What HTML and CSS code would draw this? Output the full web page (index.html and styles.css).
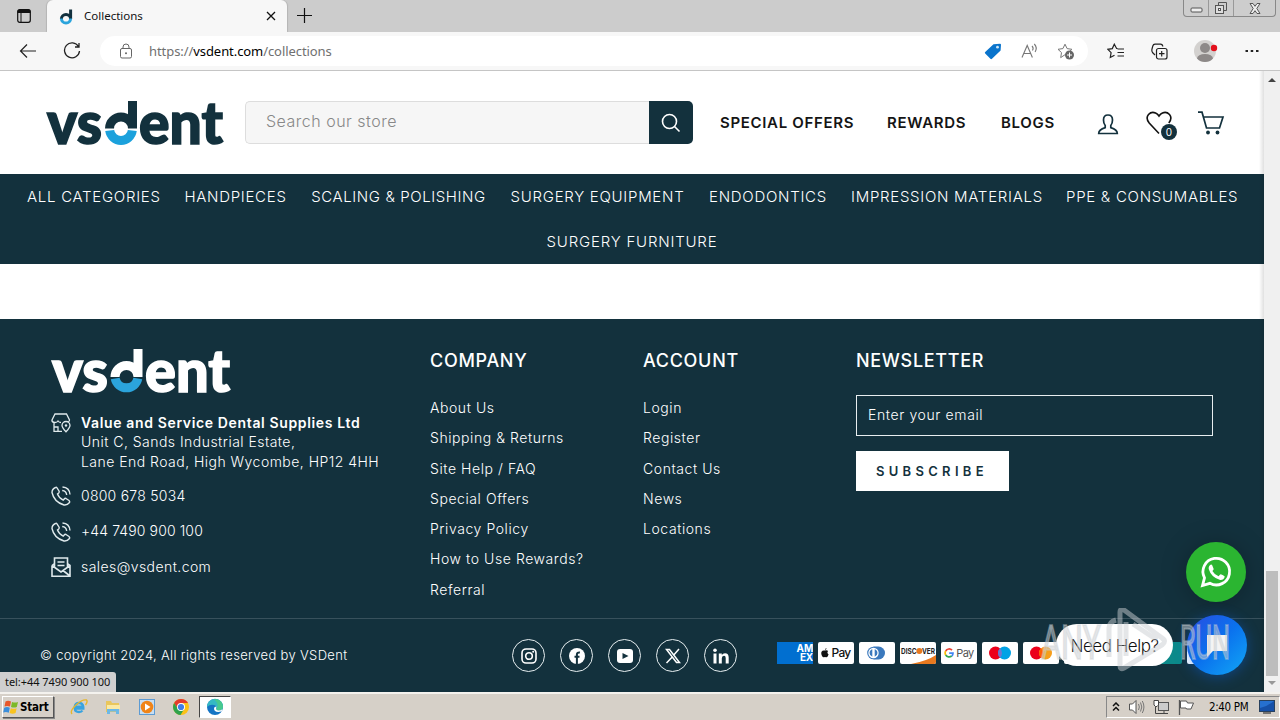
FILE: index.html
```html
<!DOCTYPE html>
<html lang="en">
<head>
<meta charset="utf-8">
<title>Collections</title>
<link rel="stylesheet" href="styles.css">
</head>
<body>
<div class="window">
  <div class="tabbar">
    <svg class="tab-actions" width="16" height="16" viewBox="0 0 16 16"><rect x="1.7" y="1.7" width="12.6" height="12.6" rx="2" fill="none" stroke="#111" stroke-width="1.2"/><path d="M1.5 5V3.5a2 2 0 0 1 2-2h9a2 2 0 0 1 2 2V5z" fill="#111"/><path d="M5 5v9" stroke="#111"/></svg>
    <div class="tab">
      <svg width="14" height="17" viewBox="0 0 14 17"><path d="M2.4 11a4.6 4.6 0 0 1 9.2 0V1.5" fill="none" stroke="#12303d" stroke-width="3"/><path d="M2.4 10.5a4.6 4.6 0 0 0 9.2 0" fill="none" stroke="#2ba4dc" stroke-width="3"/></svg>
      <span class="tab-title">Collections</span>
      <svg class="tab-close" width="10" height="10" viewBox="0 0 10 10"><path d="M1 1l8 8M9 1L1 9" stroke="#111" stroke-width="1.3"/></svg>
    </div>
    <svg class="new-tab" width="15" height="15" viewBox="0 0 15 15"><path d="M7.500 0v15M0 7.500h15" stroke="#111" stroke-width="1.200"/></svg>
    <div class="win-controls">
      <span class="wc"><svg width="13" height="6" viewBox="0 0 13 6"><rect x="1" y="1" width="11" height="4" rx="1" fill="#eee" stroke="#555"/></svg></span>
      <span class="wc"><svg width="14" height="14" viewBox="0 0 14 14"><path d="M4.500 4V1.500h8v8H10" fill="none" stroke="#555"/><rect x="1.500" y="4.500" width="8" height="8" fill="#ddd" stroke="#555"/><rect x="4.500" y="7.500" width="2" height="2" fill="#fff" stroke="#555"/></svg></span>
      <span class="wc wide"><svg width="12" height="11" viewBox="0 0 12 11"><path d="M1 .5h3l2 2.800 2-2.800h3L7.800 5.500 11 10.500H8L6 7.700 4 10.500H1l3.200-5z" fill="#eee" stroke="#555"/></svg></span>
    </div>
  </div>

  <div class="toolbar">
    <svg class="back" width="18" height="16" viewBox="0 0 18 16"><path d="M17 8H1.500M8 1.500L1.500 8 8 14.500" fill="none" stroke="#222" stroke-width="1.200"/></svg>
    <svg class="reload" width="18" height="18" viewBox="0 0 18 18"><path d="M15.500 4.500A7.500 7.500 0 1 0 16.500 9M16 1v4h-4" fill="none" stroke="#222" stroke-width="1.300"/></svg>
    <div class="address">
      <svg class="lock" width="14" height="16" viewBox="0 0 14 16"><rect x="1.500" y="5.500" width="11" height="9.500" rx="1.500" fill="none" stroke="#666"/><path d="M4 5.500V4a3 3 0 0 1 6 0v1.500" fill="none" stroke="#666"/><circle cx="7" cy="10.300" r="1" fill="#666"/></svg>
      <span class="url">https://<b>vsdent.com</b>/collections</span>
      <svg class="tag" width="18" height="17" viewBox="0 0 18 17"><path d="M9.500 1.200L16 .800q1 0 1 1L16.600 7.500 8 15.800q-.8.700-1.600 0L1.200 10.600q-.8-.8 0-1.600z" fill="#0a74cc"/><circle cx="13.500" cy="4.200" r="1.400" fill="#cfe6f7"/></svg>
      <svg class="read" width="18" height="16" viewBox="0 0 18 16"><path d="M1 14.500L6.200 2.500l5.200 12M3 10.500h6.600M11 3q2 2 .500 4.500M13.300 1q3.400 3.500.800 8" fill="none" stroke="#777" stroke-width="1.100"/></svg>
      <svg class="fav" width="18" height="17" viewBox="0 0 18 17"><path d="M8 1.200l2.100 4.400 4.800.7-3.500 3.400.3 2-3.700 0-4.300 2.900.8-5L1 6.300l4.900-.7z" fill="none" stroke="#777"/><circle cx="12.500" cy="12" r="4.500" fill="#666"/><path d="M12.500 9.500v5M10 12h5" stroke="#fff"/></svg>
    </div>
    <svg class="t1" width="18" height="16" viewBox="0 0 18 16"><path d="M10.500 5.500H9.600L7.300 1.200 5.300 5.600.900 6.300l3.200 3.300-.8 4.900 4.200-2.300M10.500 6h6.500M10.500 9.500h6.500M10.500 13h6.500" fill="none" stroke="#222" stroke-width="1.200"/></svg>
    <svg class="t2" width="17" height="17" viewBox="0 0 17 17"><rect x="5.500" y="5.500" width="10.500" height="10.500" rx="2" fill="none" stroke="#222" stroke-width="1.200"/><path d="M10.700 8v5.500M8 10.700h5.500M4 12L1.500 9.500Q.500 8 1 6l.8-3Q2.300 1.300 4 1.200h5.500q2 0 2.300 2.300" fill="none" stroke="#222" stroke-width="1.200"/></svg>
    <svg class="profile" width="24" height="24" viewBox="0 0 24 24"><defs><clipPath id="av"><circle cx="11" cy="12" r="11"/></clipPath></defs><circle cx="11" cy="12" r="11" fill="#d3d1cf"/><g clip-path="url(#av)" fill="#8d8988"><circle cx="11" cy="9" r="5"/><ellipse cx="11" cy="19.500" rx="8" ry="4.500"/></g><circle cx="20" cy="9" r="3.200" fill="#e3101c"/></svg>
    <svg class="more" width="14" height="4" viewBox="0 0 14 4"><path d="M.500 1h2.500v2H.500zM5.700 1h2.500v2H5.700zM11 1h2.500v2H11z" fill="#222"/></svg>
  </div>

  <div class="viewport">
    <div class="page">
      <header class="header">
        <svg class="logo" width="180" height="50" viewBox="0 0 180 50">
          <text class="wordmark" x="2" y="44.500" textLength="55" lengthAdjust="spacingAndGlyphs">vs</text>
          <path d="M64.500 29.500a11.500 11.500 0 0 1 23 0V2" fill="none" stroke="#13313d" stroke-width="9"/>
          <path d="M64.700 31.500a11.400 11.400 0 0 0 22.600 0" fill="none" stroke="#1ba1dc" stroke-width="9"/>
          <text class="wordmark" x="94" y="44.500" textLength="84" lengthAdjust="spacingAndGlyphs">ent</text>
        </svg>
        <div class="search"><span class="search-field">Search our store</span><span class="search-btn"><svg width="20" height="20" viewBox="0 0 20 20"><circle cx="8.500" cy="8.500" r="7" fill="none" stroke="#fff" stroke-width="1.600"/><path d="M13.500 13.500l5 5" stroke="#fff" stroke-width="1.600"/></svg></span></div>
        <nav class="top-links"><a>SPECIAL OFFERS</a><a>REWARDS</a><a>BLOGS</a></nav>
        <svg class="account" width="22" height="22" viewBox="0 0 22 22"><path d="M1.700 20.500h18.600q0-4-6.500-5.900V12.500Q15.500 10.500 15.500 7q0-5-4.500-5T6.500 7q0 3.500 1.700 5.500v2.100q-6.500 1.900-6.500 5.900z" fill="none" stroke="#13313d" stroke-width="1.700"/></svg>
        <div class="wish"><svg width="26" height="24" viewBox="0 0 26 24"><path d="M13 22.500L3.200 12Q-.6 7 2.500 3.500 5.500.300 9.500 2q2 .8 3.500 3Q14.500 2.800 16.500 2q4-1.700 7 1.500 3.100 3.500-.7 8.500" fill="none" stroke="#111" stroke-width="1.600"/></svg><span class="badge">0</span></div>
        <svg class="cart" width="28" height="25" viewBox="0 0 28 25"><path d="M1 1.200h4L9.500 17h13L26 6H6.500" fill="none" stroke="#13313d" stroke-width="1.700"/><circle cx="11" cy="21.500" r="1.900" fill="#13313d"/><circle cx="20.500" cy="21.500" r="1.900" fill="#13313d"/></svg>
      </header>
      <nav class="cats">
        <div class="cat-row"><a>ALL CATEGORIES</a><a>HANDPIECES</a><a class="tight">SCALING &amp; POLISHING</a><a>SURGERY EQUIPMENT</a><a>ENDODONTICS</a><a>IMPRESSION MATERIALS</a><a>PPE &amp; CONSUMABLES</a></div>
        <div class="cat-last"><a>SURGERY FURNITURE</a></div>
      </nav>
      <main class="blank"></main>
      <footer class="footer">
        <div class="foot-main">
          <section class="about">
            <svg class="foot-logo" width="182" height="50" viewBox="0 0 182 50">
              <text class="wordmark light" x="2" y="44.500" textLength="56" lengthAdjust="spacingAndGlyphs">vs</text>
              <path d="M65 30a11.500 11.500 0 0 1 23 0V2" fill="none" stroke="#fff" stroke-width="9"/>
              <path d="M65.200 31.500a11.500 11.500 0 0 0 22.600 0" fill="none" stroke="#2ba4dc" stroke-width="9"/>
              <text class="wordmark light" x="95" y="44.500" textLength="85" lengthAdjust="spacingAndGlyphs">ent</text>
            </svg>
            <div class="contact addr">
              <svg width="20" height="20" viewBox="0 0 20 20"><path d="M3 9v9.300h8M3 9.500Q.500 9 1 7l3-6h11.500l3 6q.2 1-1 1.800M1 7.500Q2 9.500 4 9.500T7 8q1 1.500 3 1.500M7 18.300V14H3M15 18.800q-4-4.300-4-6.300a4 4 0 0 1 8 0q0 2-4 6.300z" fill="none" stroke="#dfe9ec" stroke-width="1.300"/><circle cx="15" cy="12.500" r="1.200" fill="#dfe9ec"/></svg>
              <div class="lines"><strong>Value and Service Dental Supplies Ltd</strong><span>Unit C, Sands Industrial Estate,</span><span>Lane End Road, High Wycombe, HP12 4HH</span></div>
            </div>
            <div class="contact"><svg width="20" height="20" viewBox="0 0 20 20"><path d="M4.500 1.500Q1 3 1 6.500 3 16 13 19q3 .5 5.500-2.500.5-1-.500-2l-3-2q-1-.5-1.800.5l-1 1.200Q8 12 6.500 8l1.200-1Q8.500 6 8 5L6 1.800q-.6-.8-1.500-.3zM11.500 1Q18.500 1.500 19 8.500M11.200 4.500q4 .3 4.500 4.500" fill="none" stroke="#dfe9ec" stroke-width="1.400"/></svg><span class="p1">0800 678 5034</span></div>
            <div class="contact second"><svg width="20" height="20" viewBox="0 0 20 20"><path d="M4.500 1.500Q1 3 1 6.500 3 16 13 19q3 .5 5.500-2.500.5-1-.500-2l-3-2q-1-.5-1.800.5l-1 1.200Q8 12 6.500 8l1.200-1Q8.500 6 8 5L6 1.800q-.6-.8-1.500-.3zM11.500 1Q18.500 1.500 19 8.500M11.200 4.500q4 .3 4.500 4.500" fill="none" stroke="#dfe9ec" stroke-width="1.400"/></svg><span class="p2">+44 7490 900 100</span></div>
            <div class="contact"><svg width="20" height="20" viewBox="0 0 20 20"><path d="M1 8.500v10.700h18V8.500L16.500 6.500M1 8.500l2.500-2M3.500 10V1h13v9M1 8.500l9 6.500 9-6.500M19 19l-7-5.500M6.500 5h7M6.500 8.500h7" fill="none" stroke="#dfe9ec" stroke-width="1.600"/></svg><span class="p3">sales@vsdent.com</span></div>
          </section>
          <section class="links company"><h2>COMPANY</h2><a>About Us</a><a>Shipping &amp; Returns</a><a>Site Help / FAQ</a><a>Special Offers</a><a>Privacy Policy</a><a>How to Use Rewards?</a><a>Referral</a></section>
          <section class="links account-links"><h2>ACCOUNT</h2><a>Login</a><a>Register</a><a>Contact Us</a><a>News</a><a>Locations</a></section>
          <section class="news"><h2>NEWSLETTER</h2><div class="email">Enter your email</div><div class="subscribe">SUBSCRIBE</div></section>
        </div>
        <div class="foot-bottom">
          <span class="copy">© copyright 2024, All rights reserved by VSDent</span>
          <div class="socials">
            <span><svg viewBox="0 0 16 16"><rect x="1" y="1" width="14" height="14" rx="4" fill="none" stroke="#fff" stroke-width="1.600"/><circle cx="8" cy="8" r="3.300" fill="none" stroke="#fff" stroke-width="1.600"/><circle cx="12.200" cy="3.800" r="1" fill="#fff"/></svg></span>
            <span><svg viewBox="0 0 16 16"><circle cx="8" cy="8" r="8" fill="#fff"/><path d="M7.900 16V6.500q0-2.300 3-2M5.500 8.800h5" fill="none" stroke="#13313d" stroke-width="2"/></svg></span>
            <span><svg viewBox="0 0 16 16"><rect y="1" width="16" height="14" rx="3" fill="#fff"/><path d="M5.500 5l6 3-6 3z" fill="#13313d"/></svg></span>
            <span><svg viewBox="0 0 16 16"><path d="M1.500 1.500h3L14.500 14.500h-3zM14 1L9 6.800M7 9.200L1.500 15" fill="none" stroke="#fff" stroke-width="1.500"/></svg></span>
            <span><svg viewBox="0 0 16 16"><path d="M.500 5.500h3V15.500h-3zM5.800 5.500h3v1.400q1-1.700 3.200-1.700 3.700 0 3.700 4.300v6h-3v-5.400q0-2.300-1.700-2.300-2.200 0-2.200 2.500v5.200h-3z" fill="#fff"/><circle cx="2" cy="2.300" r="1.800" fill="#fff"/></svg></span>
          </div>
          <div class="pay">
            <span class="amex"><b>AM</b><b>EX</b></span>
            <span class="apple"><svg width="8" height="10" viewBox="0 0 8 10"><path d="M4 2.600Q5.500 1.800 7.200 3 5.400 4.500 7.600 6.500 6.400 9.700 5 9.300q-1-.4-2 0Q1.800 9.600.8 7.500-.6 4 1.500 2.700 2.500 2.200 4 2.600zM3.900 2Q4 .4 5.600 0 5.600 1.700 3.900 2z" fill="#111"/></svg>Pay</span>
            <span><svg width="36" height="22" viewBox="0 0 36 22"><path d="M14.500 4.500h5a6.500 6.500 0 0 1 0 13h-5z" fill="#3b79bd"/><circle cx="14.500" cy="11" r="6.300" fill="#3b79bd"/><circle cx="14.500" cy="11" r="5.200" fill="#fff"/><path d="M13.300 7.200a4 4 0 0 0 0 7.600zM15.700 7.200a4 4 0 0 1 0 7.600z" fill="#3b79bd"/></svg></span>
            <span class="discover"><svg width="36" height="22" viewBox="0 0 36 22"><path d="M36 13v9H11q16-3 25-9z" fill="#e8791f"/><circle cx="19.300" cy="9" r="3" fill="#e8791f"/><text x="1" y="12" textLength="15.500" lengthAdjust="spacingAndGlyphs">DISC</text><text x="22" y="12" textLength="13" lengthAdjust="spacingAndGlyphs">VER</text></svg></span>
            <span class="gpay"><svg width="10" height="10" viewBox="0 0 10 10" fill="none" stroke-width="1.700"><path d="M8 2.200A3.900 3.900 0 0 0 1.700 3" stroke="#ea4335"/><path d="M1.700 3a4 4 0 0 0 0 4" stroke="#fbbc04"/><path d="M1.700 7A4 4 0 0 0 7.700 8" stroke="#34a853"/><path d="M5.200 5.200H9Q9 7 7.700 8" stroke="#4285f4"/></svg>Pay</span>
            <span><svg width="36" height="22" viewBox="0 0 36 22"><circle cx="13.500" cy="11" r="6.500" fill="#eb001b"/><circle cx="22.500" cy="11" r="6.500" fill="#00a2e5"/><path d="M18 6.300a6.500 6.500 0 0 1 0 9.400 6.500 6.500 0 0 1 0-9.400z" fill="#7375cf"/></svg></span>
            <span><svg width="36" height="22" viewBox="0 0 36 22"><circle cx="13.500" cy="11" r="6.500" fill="#eb001b"/><circle cx="22.500" cy="11" r="6.500" fill="#f79e1b"/><path d="M18 6.300a6.500 6.500 0 0 1 0 9.400 6.500 6.500 0 0 1 0-9.400z" fill="#ff5f00"/></svg></span>
            <span></span><span></span><span class="union"></span><span></span>
          </div>
        </div>
      </footer>
      <div class="shade"></div>
      <svg class="whatsapp" width="60" height="60" viewBox="0 0 60 60"><circle cx="30" cy="30" r="30" fill="#2bb531"/><path d="M16.500 43.500l2-7.700a13.300 13.300 0 1 1 5.400 5.500z" fill="none" stroke="#fff" stroke-width="2.800"/><path d="M25 22.500q-2.600 1.300-2.300 4.500 2.500 8.500 11.500 11 3.500.2 4.500-3.200.2-.8-3.900-2.500-.6-.2-2.200 2-4-1.600-6.200-5.400 1.600-1.500 1.200-2.200l-1.400-3.500q-.4-.8-1.200-.7z" fill="#fff"/></svg>
      <svg class="messenger" width="76" height="76" viewBox="0 0 76 76"><defs><linearGradient id="mg" x1="0" y1="0" x2="1" y2="1"><stop offset="0" stop-color="#2b4be0"/><stop offset=".5" stop-color="#0a72ee"/><stop offset="1" stop-color="#12a8f5"/></linearGradient></defs><circle cx="38" cy="38" r="30" fill="url(#mg)"/><path d="M28 28h20v16H34l-6 6z" fill="#f4f4f4"/></svg>
      <div class="help">Need Help?</div>
      <div class="status">tel:+44 7490 900 100</div>
    </div>
    <div class="scrollbar"><svg width="8" height="4" viewBox="0 0 8 4"><path d="M0 4l4-4 4 4z" fill="#444"/></svg><div class="thumb"></div><svg width="8" height="4" viewBox="0 0 8 4"><path d="M0 0l4 4 4-4z" fill="#999"/></svg></div>
  </div>

  <div class="taskbar">
    <div class="start"><svg width="16" height="16" viewBox="0 0 16 16"><path d="M2.500 2.500Q5 1 8 2.500L7 7.500Q4 6.300 1.500 7.500z" fill="#e8572a"/><path d="M9 3q3 1.200 6 0l-1.200 5Q11 9 8 8z" fill="#7db928"/><path d="M1.200 8.700Q4 7.500 6.800 8.700l-1 5Q3 12.300.200 13.500z" fill="#3b8edb"/><path d="M7.800 9.200q3 1.200 5.800 0l-1 4.800q-3 1.300-6 0z" fill="#f9c31f"/></svg><b>Start</b></div>
    <div class="quick">
      <svg width="18" height="18" viewBox="0 0 18 18"><path d="M14.500 10.500H4.800Q5 14 9 14q2.500 0 3.400-1.500M4.800 8.700Q5.200 5 9 5t4.200 3.700z" fill="none" stroke="#38a3e0" stroke-width="2.400"/><path d="M2 16Q-.5 13 6 7T16.500 2Q18 3.500 15.500 7" fill="none" stroke="#e7b62c" stroke-width="1.400"/></svg>
      <svg width="18" height="18" viewBox="0 0 18 18"><path d="M2 3h5l1 2h7v9H2z" fill="#e9c65c"/><path d="M3 7h13v4H3z" fill="#fbe9a4"/><path d="M3 16v-5h12v5h-3v-2.500H6V16z" fill="#6cb8e6"/></svg>
      <svg width="18" height="18" viewBox="0 0 18 18"><rect x="1.500" y="1.500" width="15" height="15" fill="#c8def2" stroke="#5d9bd3"/><circle cx="9" cy="9" r="6.300" fill="#f08418"/><path d="M7 5.500L12.500 9 7 12.500z" fill="#fff"/></svg>
      <svg width="18" height="18" viewBox="0 0 18 18"><circle cx="9" cy="9" r="8" fill="#fbc116"/><path d="M2.100 5A8 8 0 0 1 16 5H9L6 11z" fill="#e33b2e"/><path d="M2.100 5A8 8 0 0 0 8.500 17l3.700-6H6z" fill="#2fa24c"/><circle cx="9" cy="9" r="4" fill="#fff"/><circle cx="9" cy="9" r="3.100" fill="#3f7de8"/></svg>
      <span class="edge"><svg width="18" height="18" viewBox="0 0 18 18"><circle cx="9" cy="9" r="8" fill="#1474c4"/><path d="M1 9A8 8 0 0 1 17 8.500q0 4-4.500 4-3 0-2-2.300Q11 8 8 7 4 6 1 9z" fill="#35b9c4"/><path d="M8 1Q16.500 1 17 8.500q0 4-4.500 4-3 0-2-2.300 3.500-3-2.500-9.200z" fill="#48c98f"/><path d="M10.500 8.500q-1.500 4 2 4 2 0 4-1.200l-1 2.200q-7.500 1.500-7.500-3 0-2 2.500-2z" fill="#fff"/></svg></span>
    </div>
    <div class="tray">
      <svg width="8" height="10" viewBox="0 0 8 10"><path d="M1 4l3-3 3 3M1 8.500l3-3 3 3" fill="none" stroke="#111" stroke-width="1.500"/></svg>
      <svg width="17" height="16" viewBox="0 0 17 16"><path d="M1.500 5h3L8 1.500v13L4.500 11h-3z" fill="#fff" stroke="#555"/><path d="M10.500 5q1.700 3 0 6M12.500 3.500q2.600 4.500 0 9M14.300 2q3.300 6 0 12" fill="none" stroke="#777"/></svg>
      <svg width="17" height="16" viewBox="0 0 17 16"><rect x="5.500" y="3.500" width="10" height="8" fill="#ccc" stroke="#555"/><path d="M7 14.500h8M11 12v2M2.500 7v7.500H8" fill="none" stroke="#444"/><path d="M1 1.500h4.500V6L4 7.500H2.500L1 6z" fill="#fff" stroke="#444"/></svg>
      <svg width="17" height="16" viewBox="0 0 17 16"><path d="M1.500 1v15" stroke="#555" stroke-width="1.300"/><path d="M2.500 2h6l1 2h6l-2.500 6H8.500l-.5-1H2.500z" fill="#fff" stroke="#555"/></svg>
      <span class="clock">2:40 PM</span>
      <svg width="16" height="14" viewBox="0 0 16 14"><rect x=".5" y=".5" width="15" height="11" fill="#2670d0" stroke="#28415e"/><path d="M1 8Q8 7 15 1v10H1z" fill="#1650a8"/><path d="M4 13h8" stroke="#555" stroke-width="1.500"/></svg>
    </div>
  </div>
  <svg class="watermark" width="192" height="64" viewBox="0 0 192 64"><g class="wm-text"><text x="2" y="51" textLength="60" lengthAdjust="spacingAndGlyphs">ANY</text><text x="141" y="51" textLength="50" lengthAdjust="spacingAndGlyphs">RUN</text></g><path d="M70 49V20q0-6 7-8M81 4v54q0 4 4 2l38-23q5-4 0-7L85 2q-4-2-4 2zM87 14v34M94 16l24 16" fill="none" stroke="#c9ced2" stroke-opacity=".5" stroke-width="5"/></svg>
</div>
</body>
</html>
```

FILE: styles.css
```css
* { box-sizing: border-box; }
body { margin: 0; font-family: Inter, "Open Sans", sans-serif; overflow: hidden; }
svg { display: block; flex: none; }
h2 { margin: 0; }
a, span { white-space: nowrap; }
.window { position: relative; width: 1280px; height: 720px; display: flex; flex-direction: column; background: #fff; overflow: hidden; }

/* browser chrome */
.tabbar { flex: none; height: 32px; background: #cccccc; display: flex; align-items: flex-start; font-family: "Noto Sans", sans-serif; }
.tab-actions { margin: 8px 0 0 16px; }
.tab { width: 240px; height: 32px; margin-left: 15px; padding: 0 11px 0 12px; border-radius: 6px 6px 0 0; background: #f7f7f7; display: flex; align-items: center; box-shadow: -1px 0 1px #b5b5b5, 1px 0 1px #b5b5b5; }
.tab-title { margin-left: 11px; font-size: 11.5px; color: #111; flex: 1; line-height: 32px; }
.new-tab { margin: 8px 0 0 10px; }
.win-controls { margin-left: auto; margin-right: 4px; height: 17px; display: flex; border: 1px solid #888; border-top: 0; border-radius: 0 0 4px 4px; background: #cdcdcd; }
.wc { width: 25px; display: flex; align-items: center; justify-content: center; border-right: 1px solid #999; }
.wc.wide { width: 41px; border: 0; }
.wc:first-child { padding-top: 4px; }
.toolbar { flex: none; height: 39px; background: #f7f7f7; border-bottom: 1px solid #c5c5c5; display: flex; align-items: center; }
.back { margin-left: 19px; }
.reload { margin-left: 26px; }
.address { width: 988px; height: 30px; margin-left: 19px; padding-left: 19px; border-radius: 15px; background: #fff; display: flex; align-items: center; }
.url { margin-left: 16px; width: 835px; font: 13px "Noto Sans", sans-serif; letter-spacing: -.07px; color: #707070; }
.url b { font-weight: 400; color: #000; }
.read { margin-left: 19px; }
.fav { margin-left: 18px; }
.t1 { margin-left: 19px; }
.t2 { margin-left: 26px; }
.profile { margin-left: 26px; }
.more { margin-left: 27px; }

/* page */
.viewport { flex: none; height: 621px; display: flex; }
.page { position: relative; width: 1264px; height: 621px; overflow: hidden; }
.scrollbar { width: 16px; background: #f0f0f0; display: flex; flex-direction: column; align-items: center; padding: 7px 0; }
.thumb { width: 12px; height: 105px; margin-top: auto; margin-bottom: 5px; background: #bdbdbd; }
.shade { position: absolute; right: 0; top: 0; bottom: 0; width: 5px; background: linear-gradient(90deg, transparent, rgba(0,0,0,.12)); }
.header { height: 103px; display: flex; align-items: flex-start; padding-left: 45px; }
.logo { margin-top: 28px; }
.logo, .foot-logo { overflow: visible; }
.wordmark { font-family: Lato, sans-serif; font-weight: 900; font-size: 59px; fill: #13313d; stroke: #13313d; stroke-width: 1.6px; }
.light { fill: #fff; stroke: #fff; }
.search { width: 448px; height: 43px; margin: 30px 0 0 20px; display: flex; }
.search-field { flex: 1; padding-left: 20px; border: 1px solid #ddd; border-right: 0; border-radius: 5px 0 0 5px; background: #f6f6f6; color: #888; font-size: 16px; font-weight: 300; line-height: 39px; letter-spacing: .5px; }
.search-btn { width: 44px; border-radius: 0 5px 5px 0; background: #13313d; display: flex; align-items: center; justify-content: center; }
.top-links { width: 378px; margin: 41px 0 0 27px; display: grid; grid-template-columns: 133px 80px 54px; gap: 34px; font-size: 15px; font-weight: 600; line-height: 22px; color: #151515; letter-spacing: .67px; }
.account { margin: 42px 0 0 -1px; }
.wish { position: relative; width: 31px; margin: 40px 0 0 27px; }
.badge { position: absolute; left: 15px; top: 13px; width: 16px; height: 16px; border-radius: 8px; background: #13313d; color: #fff; font-size: 10px; line-height: 16px; text-align: center; }
.cart { margin: 40px 0 0 20px; }
.cats { height: 90px; background: #13313d; color: #fff; font-size: 15px; font-weight: 300; line-height: 45px; letter-spacing: .72px; }
.cat-row { display: grid; grid-template-columns: 133px 103px 175px 175px 118px 191px 172px; gap: 24px; padding-left: 27px; }
.cat-row a { text-align: center; }
.cat-row .tight { letter-spacing: .6px; }
.cat-last { text-align: center; letter-spacing: .8px; }
.blank { height: 55px; }
.footer { height: 373px; background: #13313d; color: #fff; font-size: 14px; font-weight: 300; }
.foot-main { height: 300px; border-bottom: 1px solid #38515c; display: grid; grid-template-columns: 379px 213px 213px 357px; padding: 28px 0 0 51px; }
.foot-logo { margin-left: -1px; }
.contact { display: flex; gap: 10px; height: 20px; line-height: 20px; margin-bottom: 16px; }
.contact.addr { height: 57px; margin-top: 16px; line-height: 19px; }
.lines { display: flex; flex-direction: column; gap: .4px; letter-spacing: .47px; }
.contact.second { margin-bottom: 15px; }
.contact strong { font-weight: 600; letter-spacing: .64px; }
.p1 { letter-spacing: .25px; }
.p2 { line-height: 18px; letter-spacing: .12px; }
.p3 { letter-spacing: .43px; }
.foot-main h2 { font-size: 18px; font-weight: 500; line-height: 28px; letter-spacing: .7px; }
.links { display: flex; flex-direction: column; }
.links h2 { margin-bottom: 18px; }
.links a { line-height: 30.300px; letter-spacing: .57px; }
.email { margin-top: 20px; height: 41px; border: 1px solid #e8eef0; padding-left: 11px; line-height: 38px; letter-spacing: .62px; }
.subscribe { width: 153px; height: 40px; margin-top: 15px; background: #fff; color: #13313d; font-size: 13px; font-weight: 600; letter-spacing: 4.300px; line-height: 40px; padding-left: 20px; }
.foot-bottom { height: 73px; display: flex; align-items: center; padding-left: 40px; }
.copy { width: 472px; margin-top: -2px; font-size: 13px; letter-spacing: .33px; }
.socials { width: 265px; display: flex; gap: 15px; }
.socials span { width: 33px; height: 33px; border: 1px solid #e6eef0; border-radius: 50%; display: flex; align-items: center; justify-content: center; }
.socials svg { width: 16px; height: 16px; }
.pay { display: flex; gap: 5px; margin-top: -5px; }
.pay span { width: 36px; height: 22px; flex: none; border-radius: 2px; background: #fff; color: #111; display: flex; align-items: center; justify-content: center; overflow: hidden; font: 500 12px/22px Inter, sans-serif; }
.pay .amex { background: #016fd0; color: #fff; flex-direction: column; align-items: flex-end; border-radius: 0; }
.amex b { font-size: 10px; line-height: 9px; font-weight: 700; letter-spacing: -.2px; }
.pay .apple { gap: 2px; letter-spacing: -.7px; }
.pay .gpay { gap: 2px; color: #555; font-weight: 400; font-size: 11px; letter-spacing: -.6px; }
.discover text { font: 700 7.500px Inter, sans-serif; fill: #222; }
.pay .union { background: #0c8a8a; }

/* floating widgets */
.whatsapp { position: absolute; left: 1186px; top: 471px; filter: drop-shadow(0 2px 12px rgba(0,0,0,.25)); }
.messenger { position: absolute; left: 1179px; top: 536px; filter: drop-shadow(0 2px 7px rgba(10,100,240,.4)); }
.help { position: absolute; left: 1056px; top: 553px; width: 117px; height: 42px; border-radius: 21px; background: #fff; color: #111; font-size: 17px; font-weight: 300; line-height: 44px; text-align: center; letter-spacing: -.5px; }
.status { position: absolute; left: 0; bottom: 0; width: 116px; height: 20px; padding-left: 5px; border-radius: 0 3px 0 0; background: #cfcfcf; color: #111; font: 11px/20px "Noto Sans", sans-serif; letter-spacing: -.05px; white-space: nowrap; }
.watermark { position: absolute; left: 1039px; top: 608px; }
.wm-text text { font: 400 49px Roboto, sans-serif; fill: #c9ced2; fill-opacity: .5; stroke: #c9ced2; stroke-opacity: .4; stroke-width: 2px; }

/* taskbar */
.taskbar { flex: none; height: 28px; background: #d6d0c8; border-top: 2px solid #f4f2ee; display: flex; align-items: center; font-family: "DejaVu Sans Condensed", "DejaVu Sans", sans-serif; }
.start { width: 52px; height: 22px; margin-left: 2px; border: 1px solid; border-color: #fff #555 #555 #fff; box-shadow: 1px 1px 0 #888; display: flex; align-items: center; gap: 1px; font-size: 11.500px; font-stretch: condensed; }
.start b { letter-spacing: -.2px; }
.quick { display: flex; align-items: center; gap: 16px; margin-left: 16px; }
.edge { width: 32px; height: 22px; margin-left: -7px; border: 1px solid; border-color: #444 #fff #fff #444; background: #fff; display: flex; align-items: center; justify-content: center; }
.tray { width: 174px; height: 22px; margin-left: auto; padding-left: 5px; border: 1px solid; border-color: #888 #fff #fff #888; display: flex; align-items: center; gap: 8px; }
.clock { margin-left: 6px; width: 42px; font-size: 11.500px; letter-spacing: -.35px; font-stretch: condensed; }
```
